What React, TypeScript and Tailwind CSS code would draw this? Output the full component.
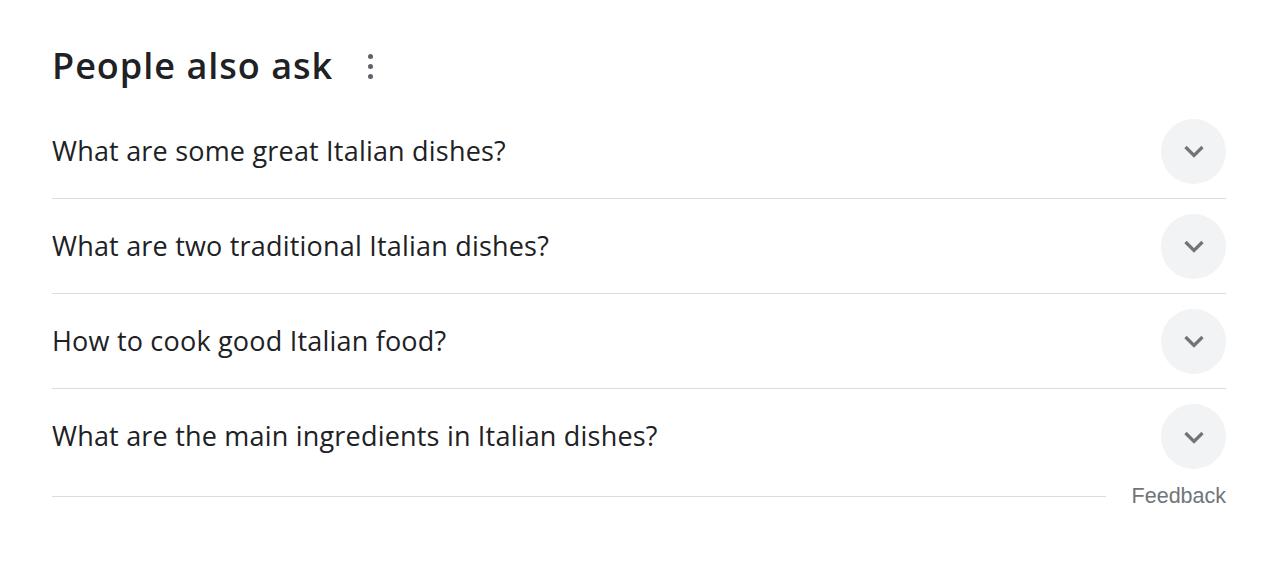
const questions = [
  "What are some great Italian dishes?",
  "What are two traditional Italian dishes?",
  "How to cook good Italian food?",
  "What are the main ingredients in Italian dishes?",
];

const App = () => {
  return (
    <div className="min-h-[576px] bg-white pl-[52px] pr-[62px] pt-[42px] text-[#202124] [font-family:'Open_Sans',Roboto,sans-serif]">
      {/* Heading */}
      <div className="flex h-[48px] items-center">
        <h2 className="text-[36px] font-semibold tracking-[1px] leading-none">People also ask</h2>
        <button className="ml-[34px] flex h-[26px] w-[6px] flex-col items-center justify-center gap-[5px]">
          <span className="h-[5px] w-[5px] shrink-0 rounded-full bg-[#5f6368]" />
          <span className="h-[5px] w-[5px] shrink-0 rounded-full bg-[#5f6368]" />
          <span className="h-[5px] w-[5px] shrink-0 rounded-full bg-[#5f6368]" />
        </button>
      </div>

      {/* Questions */}
      <div className="mt-[14px]">
        {questions.map((q, i) => (
          <div
            key={q}
            className={`flex h-[95px] items-center justify-between ${
              i < questions.length - 1 ? "border-b border-[#dadce0]" : ""
            }`}
          >
            <span className="text-[27px] tracking-[0.2px]">{q}</span>
            <div className="flex h-[65px] w-[65px] items-center justify-center rounded-full bg-[#f1f3f4]">
              <svg width="22" height="16" viewBox="0 0 22 16" fill="none">
                <path d="M2.5 4 L11 12.5 L19.5 4" stroke="#70757a" strokeWidth="3.2" />
              </svg>
            </div>
          </div>
        ))}
      </div>

      {/* Footer */}
      <div className="flex items-center">
        <div className="h-px flex-1 bg-[#dadce0]" />
        <span className="ml-[26px] text-[21.5px] leading-[24px] text-[#70757a] [font-family:'Liberation_Sans',Arial,sans-serif]">Feedback</span>
      </div>
    </div>
  );
};

export default App;
